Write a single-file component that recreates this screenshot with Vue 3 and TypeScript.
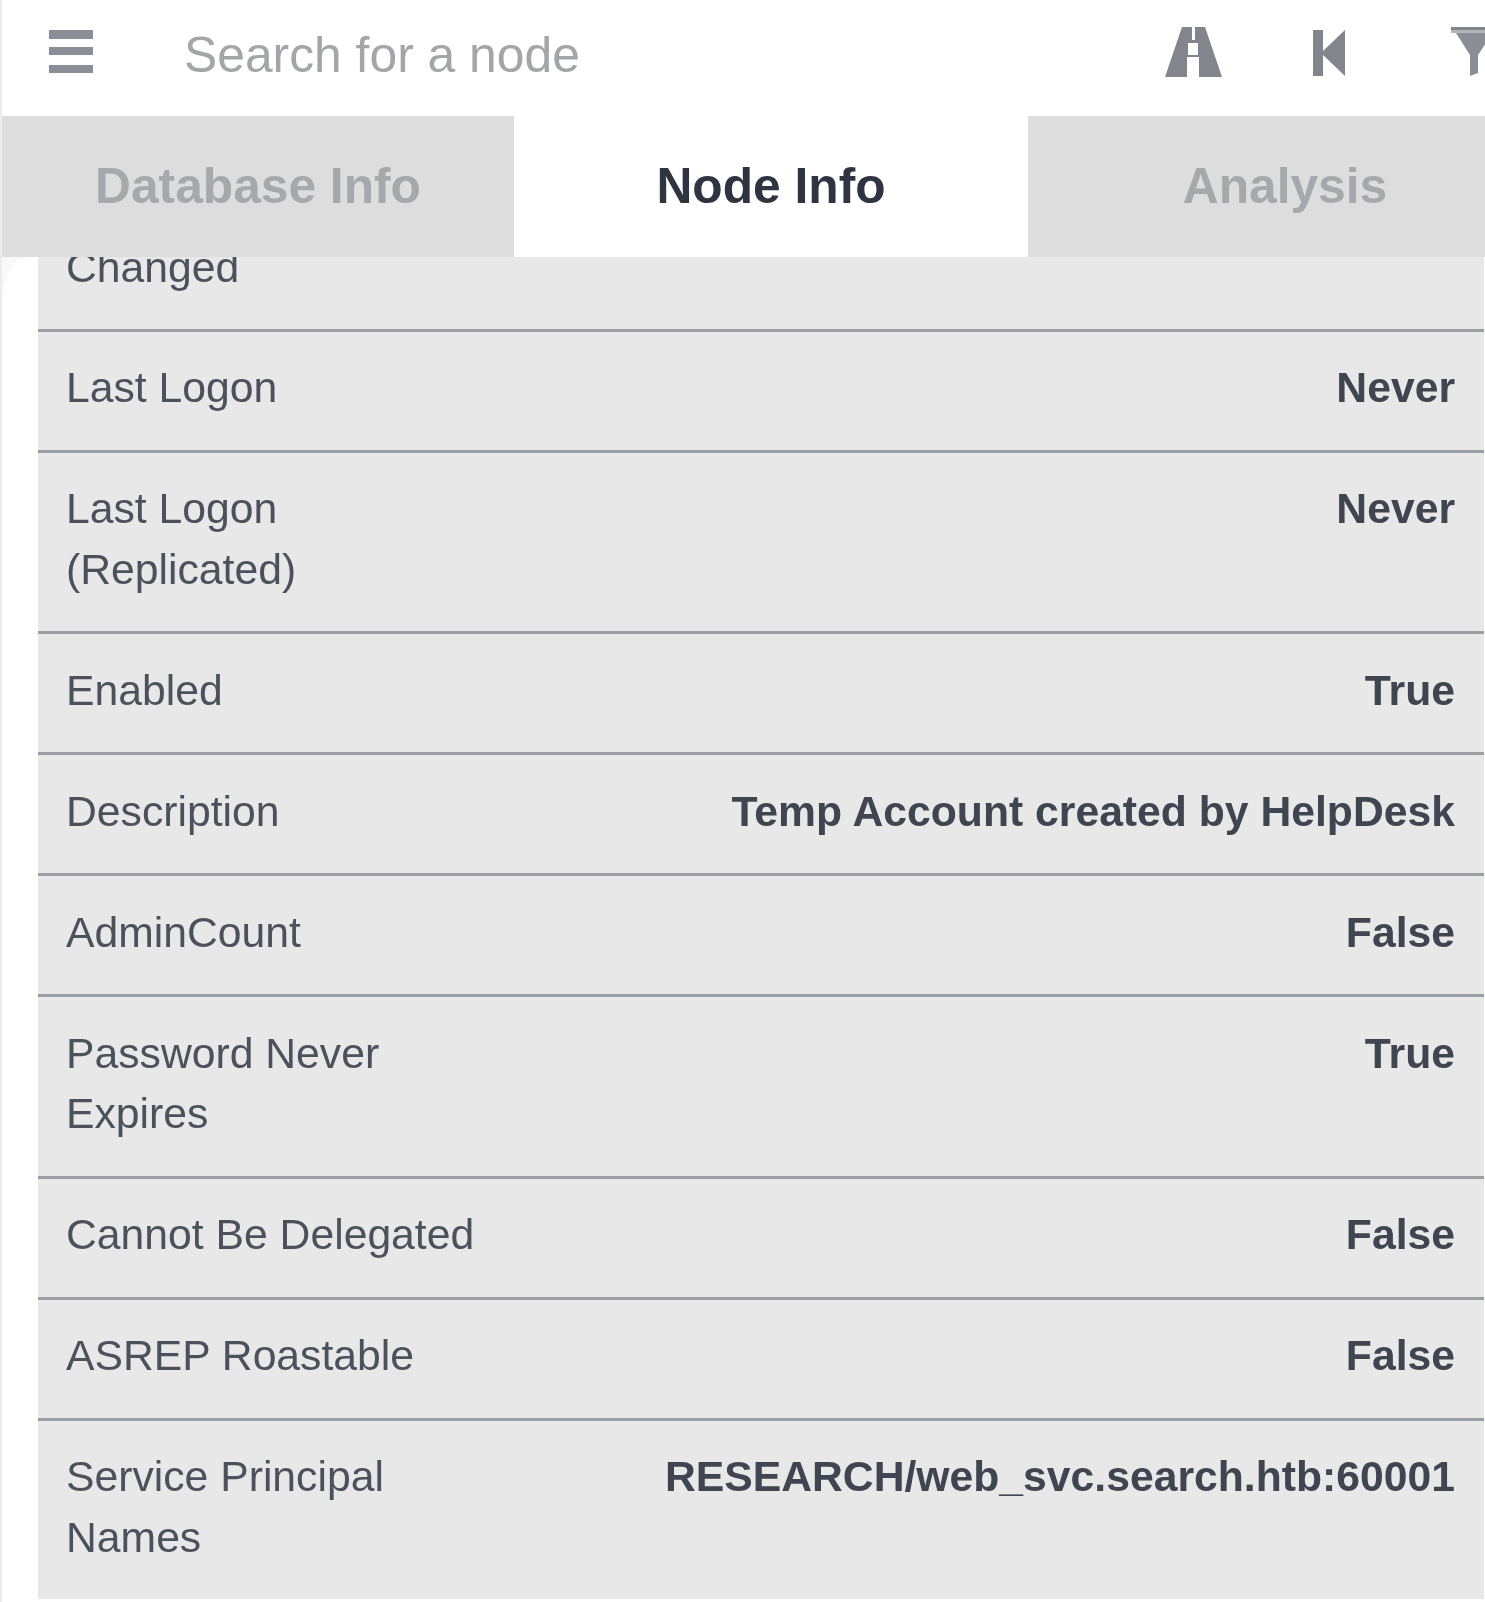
<script setup lang="ts">
interface Row { label: string; value: string }
const rows: Row[] = [
  { label: 'Password Last Changed', value: '' },
  { label: 'Last Logon', value: 'Never' },
  { label: 'Last Logon (Replicated)', value: 'Never' },
  { label: 'Enabled', value: 'True' },
  { label: 'Description', value: 'Temp Account created by HelpDesk' },
  { label: 'AdminCount', value: 'False' },
  { label: 'Password Never Expires', value: 'True' },
  { label: 'Cannot Be Delegated', value: 'False' },
  { label: 'ASREP Roastable', value: 'False' },
  { label: 'Service Principal Names', value: 'RESEARCH/web_svc.search.htb:60001' },
]
const tabs = ['Database Info', 'Node Info', 'Analysis']
</script>

<template>
  <div class="app">
    <header class="bar">
      <svg class="menu" width="44" height="43" viewBox="0 0 44 43" aria-hidden="true">
        <rect x="0" y="0" width="44" height="9" fill="#8b8e96" />
        <rect x="0" y="17" width="44" height="8" fill="#8b8e96" />
        <rect x="0" y="35" width="44" height="8" fill="#8b8e96" />
      </svg>
      <span class="search">Search for a node</span>
      <svg class="road" width="57" height="50" viewBox="0 0 57 50" aria-hidden="true">
        <path fill-rule="evenodd" d="M17 0H27V13H30V0H40L57 50H34V30H22V50H0ZM23 16V28H33V16Z" fill="#82858c" />
      </svg>
      <svg class="back" width="32" height="46" viewBox="0 0 32 46" aria-hidden="true">
        <path d="M0 0H10V21L32 0V46L10 25V46H0Z" fill="#82858c" />
      </svg>
      <svg class="filter" width="37" height="50" viewBox="0 0 37 50" aria-hidden="true">
        <rect x="0" y="0" width="37" height="3" fill="#82858c" />
        <rect x="0" y="3" width="37" height="3" fill="#b4b6ba" />
        <path d="M5 6H37V13L27 28V46L19 49V28Z" fill="#8b8e95" />
      </svg>
    </header>
    <nav class="tabs">
      <div v-for="t in tabs" :key="t" class="tab" :class="{ active: t === 'Node Info' }">{{ t }}</div>
    </nav>
    <section class="panel">
      <div class="list">
        <div v-for="r in rows" :key="r.label" class="row">
          <span class="label">{{ r.label }}</span>
          <span class="value">{{ r.value }}</span>
        </div>
      </div>
    </section>
  </div>
</template>

<style>
html, body { margin: 0; background: #fff; }
</style>

<style scoped>
.app {
  width: 1485px;
  height: 1602px;
  overflow: hidden;
  box-sizing: border-box;
  border-left: 2px solid #ececec;
  padding-bottom: 3px;
  background: #fff;
  font-family: "Liberation Sans", Arial, sans-serif;
  display: flex;
  flex-direction: column;
  filter: blur(0.7px);
}
.bar {
  height: 116px;
  flex: none;
  display: flex;
  align-items: flex-start;
  overflow: hidden;
  padding-left: 47px;
}
.menu { flex: none; margin-top: 30px; }
.search {
  flex: none;
  width: 1070px;
  margin-left: 91px;
  margin-top: 26px;
  font-size: 49.8px;
  line-height: 58px;
  color: #a3a5a9;
}
.road { flex: none; margin-top: 27px; margin-left: -89px; }
.back { flex: none; margin-top: 30px; margin-left: 91px; }
.filter { flex: none; margin-top: 27px; margin-left: 106px; }
.tabs {
  height: 141px;
  flex: none;
  display: grid;
  grid-template-columns: 512px 514px 514px;
}
.tab {
  display: flex;
  align-items: center;
  justify-content: center;
  padding-bottom: 2px;
  background: #dddddd;
  color: #a6a8ac;
  font-size: 49.7px;
  font-weight: 700;
}
.tab.active { background: #fff; color: #2f3540; }
.panel {
  flex: 1;
  min-height: 0;
  overflow: hidden;
  position: relative;
  padding: 0 1px 0 36px;
}
.panel::before {
  content: "";
  position: absolute;
  left: 0;
  top: 0;
  width: 22px;
  height: 50px;
  background: radial-gradient(ellipse 22px 50px at 100% 100%, transparent 97%, #f8f8f8 100%);
}
.list { margin-top: -106px; background: #e8e8e8; }
.row {
  display: flex;
  justify-content: space-between;
  gap: 60px;
  box-sizing: border-box;
  padding: 25.5px 29px 32px 28px;
  border-bottom: 3px solid #9a9da3;
  font-size: 42.7px;
  line-height: 60.5px;
  color: #4b525e;
}
.row:first-child { padding-bottom: 31px; }
.row:last-child { border-bottom: 0; }
.label { flex: 0 0 auto; max-width: 430px; }
.value { font-weight: 700; color: #3f4651; text-align: right; white-space: nowrap; }
</style>
